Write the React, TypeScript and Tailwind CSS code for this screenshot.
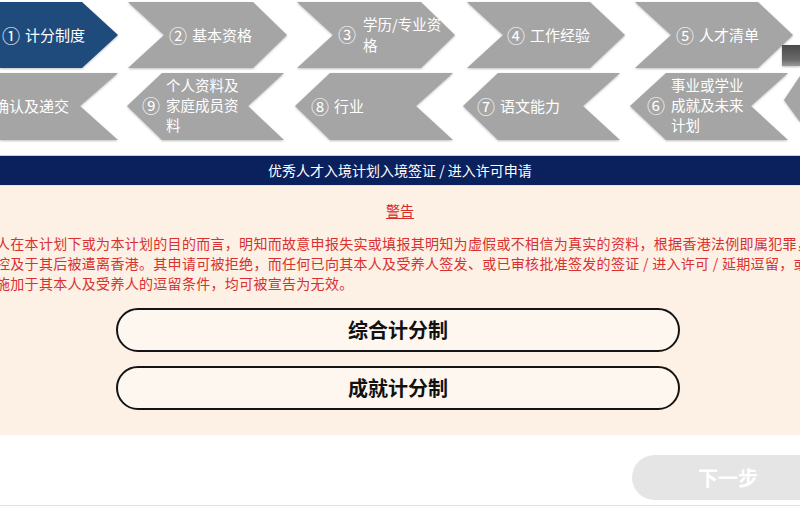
import React from "react";

const GRAY = "#a5a5a5";

// step chevrons, top row points right, bottom row points left
const topRow = [
  "128,2 253,2 287,35 253,68 128,68 164,35",
  "297,2 421,2 455,35 421,68 297,68 333,35",
  "467,2 590,2 625,35 590,68 467,68 503,35",
  "635,2 758,2 793,35 758,68 635,68 671,35",
];

const bottomRow = [
  "0,73 118,73 80,106 118,140 0,140",
  "127,106 162,73 284,73 248,106 284,140 162,140",
  "295,106 330,73 453,73 416,106 453,140 330,140",
  "463,106 498,73 620,73 583,106 620,140 498,140",
  "630,106 666,73 788,73 751,106 788,140 666,140",
  "800,76 784,100 800,122",
];

const Num = ({ n }: { n: string }) => <span className="text-[18px] leading-none">{n}</span>;

const StepDiagram = () => {
  return (
    <div className="relative h-[155px] w-full">
      <svg
        className="absolute inset-0 drop-shadow-[0_1px_1px_rgba(0,0,0,0.25)]"
        width="800"
        height="155"
        viewBox="0 0 800 155"
      >
        <defs>
          <linearGradient id="tab" x1="0" y1="0" x2="0" y2="1">
            <stop offset="0" stopColor="#4a4a4a" />
            <stop offset="0.7" stopColor="#6a6a6a" />
            <stop offset="1" stopColor="#9a9a9a" />
          </linearGradient>
        </defs>
        <polygon points="0,2 82,2 118,35 82,68 0,68" fill="#1f4b7c" />
        {topRow.map((p) => (
          <polygon key={p} points={p} fill={GRAY} />
        ))}
        {bottomRow.map((p) => (
          <polygon key={p} points={p} fill={GRAY} />
        ))}
        <rect x="782" y="45" width="18" height="21" fill="url(#tab)" />
      </svg>

      {/* top row labels */}
      <div className="absolute left-[2px] top-[24px] flex items-center gap-[5px] text-[15px] leading-[22px] text-white whitespace-nowrap">
        <Num n="①" />计分制度
      </div>
      <div className="absolute left-[169px] top-[24px] flex items-center gap-[5px] text-[15px] leading-[22px] text-white whitespace-nowrap">
        <Num n="②" />基本资格
      </div>
      <div className="absolute left-[338px] top-[13px] flex items-center gap-[7px] text-white">
        <Num n="③" />
        <span className="text-[14.5px] leading-[21px]">
          学历/专业资
          <br />格
        </span>
      </div>
      <div className="absolute left-[507px] top-[24px] flex items-center gap-[5px] text-[15px] leading-[22px] text-white whitespace-nowrap">
        <Num n="④" />工作经验
      </div>
      <div className="absolute left-[676px] top-[24px] flex items-center gap-[5px] text-[15px] leading-[22px] text-white whitespace-nowrap">
        <Num n="⑤" />人才清单
      </div>

      {/* bottom row labels */}
      <div className="absolute left-[-6px] top-[95px] text-[15px] leading-[22px] text-white whitespace-nowrap">确认及递交</div>
      <div className="absolute left-[142px] top-[75px] flex items-center gap-[6px] text-white">
        <Num n="⑨" />
        <span className="text-[14.5px] leading-[20px]">
          个人资料及
          <br />家庭成员资
          <br />料
        </span>
      </div>
      <div className="absolute left-[311px] top-[95px] flex items-center gap-[5px] text-[15px] leading-[22px] text-white whitespace-nowrap">
        <Num n="⑧" />行业
      </div>
      <div className="absolute left-[477px] top-[95px] flex items-center gap-[5px] text-[15px] leading-[22px] text-white whitespace-nowrap">
        <Num n="⑦" />语文能力
      </div>
      <div className="absolute left-[647px] top-[75px] flex items-center gap-[6px] text-white">
        <Num n="⑥" />
        <span className="text-[14.5px] leading-[20px]">
          事业或学业
          <br />成就及未来
          <br />计划
        </span>
      </div>
    </div>
  );
};

const SchemeButton = ({ label }: { label: string }) => (
  <button className="h-[44px] w-full rounded-full border-2 border-[#141414] bg-[#fef7f0] text-[20px] font-bold text-[#111]">
    {label}
  </button>
);

const App = () => {
  return (
    <div className="w-[800px] h-[506px] overflow-hidden bg-white font-['Noto_Sans_CJK_SC','Noto_Sans',sans-serif]">
      <StepDiagram />

      {/* title bar */}
      <div className="h-[30px] bg-[#0b215e] border-t border-[#c9d1df] text-center text-[14px] leading-[29px] text-white">
        优秀人才入境计划入境签证 / 进入许可申请
      </div>

      {/* warning panel */}
      <div className="h-[250px] bg-[#fdf0e5] border-t border-[#ece6e0] pt-[14px] flex flex-col">
        <div className="text-center text-[14px] leading-[20px]">
          <span className="text-[#d42a2a] underline underline-offset-2">警告</span>
        </div>
        <div className="mt-[13px] overflow-hidden text-[14px] leading-[20px] tracking-[0.3px] text-[#d93030]">
          <div className="ml-[-4px] whitespace-nowrap">
            人在本计划下或为本计划的目的而言，明知而故意申报失实或填报其明知为虚假或不相信为真实的资料，根据香港法例即属犯罪，可被检
          </div>
          <div className="ml-[-4px] whitespace-nowrap">
            控及于其后被遣离香港。其申请可被拒绝，而任何已向其本人及受养人签发、或已审核批准签发的签证 / 进入许可 / 延期逗留，或
          </div>
          <div className="ml-[-4px] whitespace-nowrap">施加于其本人及受养人的逗留条件，均可被宣告为无效。</div>
        </div>

        <div className="mt-[15px] self-start ml-[116px] w-[564px] flex flex-col gap-[14px]">
          <SchemeButton label="综合计分制" />
          <SchemeButton label="成就计分制" />
        </div>
      </div>

      {/* footer */}
      <div className="h-[71px] border-b border-[#e2e2e2] flex justify-end overflow-hidden pt-[20px]">
        <button className="h-[45px] w-[192px] mr-[-24px] rounded-full bg-[#e5e5e5] text-[20px] font-bold text-white">
          下一步
        </button>
      </div>
    </div>
  );
};

export default App;
